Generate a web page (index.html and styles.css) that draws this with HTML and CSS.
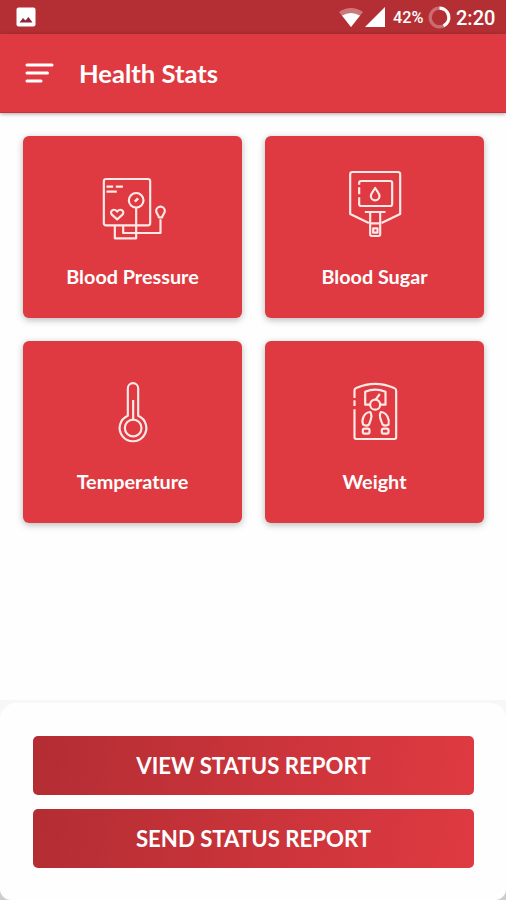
FILE: index.html
```html
<!DOCTYPE html>
<html lang="en">
<head>
    <meta charset="UTF-8">
    <meta name="viewport" content="width=device-width, initial-scale=1.0">
    <title>Health Stats</title>
    <link rel="stylesheet" href="styles.css">
</head>
<body>
    <!-- Status Bar -->
    <div class="status-bar">
        <svg class="picture" width="20" height="20" viewBox="0 0 20 20">
            <rect x="0.5" y="0.5" width="19" height="19" rx="2" fill="#fff"/>
            <path d="M3.5 15.5 L7 11 L9.5 13.5 L12.5 10 L16.5 15.5 Z" fill="#8e2440"/>
        </svg>
        <svg class="wifi" width="24" height="19" viewBox="0 0 24 19">
            <path d="M0 4 Q12 -4 24 4 L12 19 Z" fill="#fff" opacity="0.35"/>
            <path d="M3 7.5 Q12 2.5 21 7.5 L12 19 Z" fill="#fff"/>
        </svg>
        <svg class="signal" width="20" height="20" viewBox="0 0 20 20">
            <path d="M20 0 V20 H0 Z" fill="#fff"/>
        </svg>
        <span class="percent">42%</span>
        <svg class="battery" width="23" height="23" viewBox="0 0 23 23" fill="none" stroke="#fff" stroke-width="3.2">
            <circle cx="11.5" cy="11.5" r="9.3" opacity="0.3"/>
            <path d="M11.5 2.2 A9.3 9.3 0 0 1 15.5 19.9"/>
        </svg>
        <span class="time">2:20</span>
    </div>

    <!-- Header -->
    <div class="header">
        <svg width="29" height="20" viewBox="0 0 29 20" stroke="#fff" stroke-width="3" stroke-linecap="round">
            <path d="M2 2 H27 M2 10 H22.5 M2 18 H16"/>
        </svg>
        <h1>Health Stats</h1>
    </div>

    <!-- Stats -->
    <div class="grid">
        <div class="card">
            <svg class="icon" viewBox="-7.5 0 270 255">
                <rect x="40" y="42" width="139" height="139" rx="7"/>
                <path d="M48 65 H68 M76 65 H97 M48 80 H79"/>
                <circle cx="137" cy="106" r="22"/>
                <path d="M133 110 L143 100" stroke-width="8"/>
                <path d="M80 163 L64 149 C56 138 70 128 80 140 C90 128 104 138 96 149 Z"/>
                <path d="M137 128 V220 H73 V183 M98 183 V204 H210 V163"/>
                <path d="M205 157 C204 148 197 146 197 138 A13 13 0 0 1 223 138 C223 146 216 148 215 157 Z"/>
            </svg>
            <h2>Blood Pressure</h2>
        </div>
        <div class="card">
            <svg class="icon" viewBox="-1.5 15 270 255">
                <path d="M66 36 H202 Q209 36 209 43 V162 L153 189 M115 189 L59 162 V43 Q59 36 66 36"/>
                <path d="M86 74 V69 Q86 63 92 63 H179 Q185 63 185 69 V132 Q185 138 179 138 H92 Q86 138 86 132 V112 M86 82 V103"/>
                <path d="M134 84 C128 94 121 100 121 108 A13 13 0 0 0 147 108 C147 100 140 94 134 84 Z"/>
                <path d="M103 156 H165 M119 158 V223 Q119 228 124 228 H144 Q149 228 149 223 V158 M119 190 H149"/>
                <rect x="128" y="205" width="13" height="13"/>
            </svg>
            <h2>Blood Sugar</h2>
        </div>
        <div class="card">
            <svg class="icon" viewBox="-7.5 0 270 255">
                <path d="M112 137 V55 A15.5 15.5 0 0 1 143 55 V137 A40 40 0 1 1 112 137 Z"/>
                <circle cx="128" cy="174" r="25"/>
                <path d="M128 90 V148"/>
            </svg>
            <h2>Temperature</h2>
        </div>
        <div class="card">
            <svg class="icon" viewBox="-1.5 0 270 255">
                <path d="M72 84 V61 Q72 56 77 54 Q134 29 191 54 Q197 56 197 62 V202 Q197 207 192 207 H77 Q72 207 72 202 V118 M72 91 V108"/>
                <path d="M119 104 H104 V65 Q134 53 165 65 V104 H150"/>
                <circle cx="134" cy="104" r="15"/>
                <path d="M136 88 L148 72"/>
                <path d="M119 126 C101 127 92 148 98 164 Q108 170 116 163 C119 151 129 139 119 126 Z"/>
                <path d="M151 126 C169 127 178 148 174 164 Q164 170 156 163 C152 151 143 139 151 126 Z"/>
                <rect x="97" y="176" width="20" height="15" rx="5"/>
                <rect x="154" y="176" width="20" height="15" rx="5"/>
            </svg>
            <h2>Weight</h2>
        </div>
    </div>

    <!-- Reports -->
    <div class="footer">
        <div class="panel">
            <button>VIEW STATUS REPORT</button>
            <button>SEND STATUS REPORT</button>
        </div>
    </div>
</body>
</html>
```

FILE: styles.css
```css
* { box-sizing: border-box; }
body { margin: 0; height: 900px; display: flex; flex-direction: column; overflow: hidden; background: #fefefe; font-family: Lato, sans-serif; color: #fff; }
h1, h2 { margin: 0; font-weight: bold; }
.status-bar { height: 34px; padding: 0 11px 0 16px; display: flex; align-items: center; background: #b32f34; font-family: Roboto, sans-serif; }
.wifi { margin-left: auto; }
.signal { margin-left: 2px; }
.percent { width: 32px; margin-left: 8px; padding-top: 1px; font-size: 16.3px; font-weight: 500; white-space: nowrap; }
.battery { margin-left: 3px; }
.time { width: 39px; margin-left: 5px; padding-top: 1px; font-size: 20px; font-weight: 500; white-space: nowrap; }
.header { height: 79px; padding-left: 25px; display: flex; align-items: center; gap: 25px; background: #df3a41; border-bottom: 1px solid #c92f37; box-shadow: 0 1px 4px rgba(0, 0, 0, 0.35); }
.header h1 { font-size: 25.6px; }
.grid { padding: 23px 22px 0 23px; display: grid; grid-template-columns: 219px 219px; gap: 23px; }
.card { height: 182px; padding-top: 29px; display: flex; flex-direction: column; align-items: center; background: #df3a41; border-radius: 6px; box-shadow: 0 2px 7px rgba(0, 0, 0, 0.28); }
.icon { width: 90px; height: 85px; fill: none; stroke: #ffe9e7; stroke-width: 6.5; stroke-linejoin: round; }
.card h2 { margin-top: 13px; font-size: 19.8px; line-height: 26px; }
.footer { height: 200px; margin-top: auto; background: linear-gradient(#f7f7f7 50%, #ccc); }
.panel { height: 197px; margin-top: 3px; padding: 33px 32px 0 33px; display: flex; flex-direction: column; gap: 14px; background: #fefefe; border-radius: 16px 16px 11px 11px; }
button { height: 59px; padding: 0; border: 0; border-radius: 5px; background: linear-gradient(100deg, #b32d33, #df3a41); color: #fff; font-family: Lato, sans-serif; font-size: 22.2px; font-weight: bold; }
```
